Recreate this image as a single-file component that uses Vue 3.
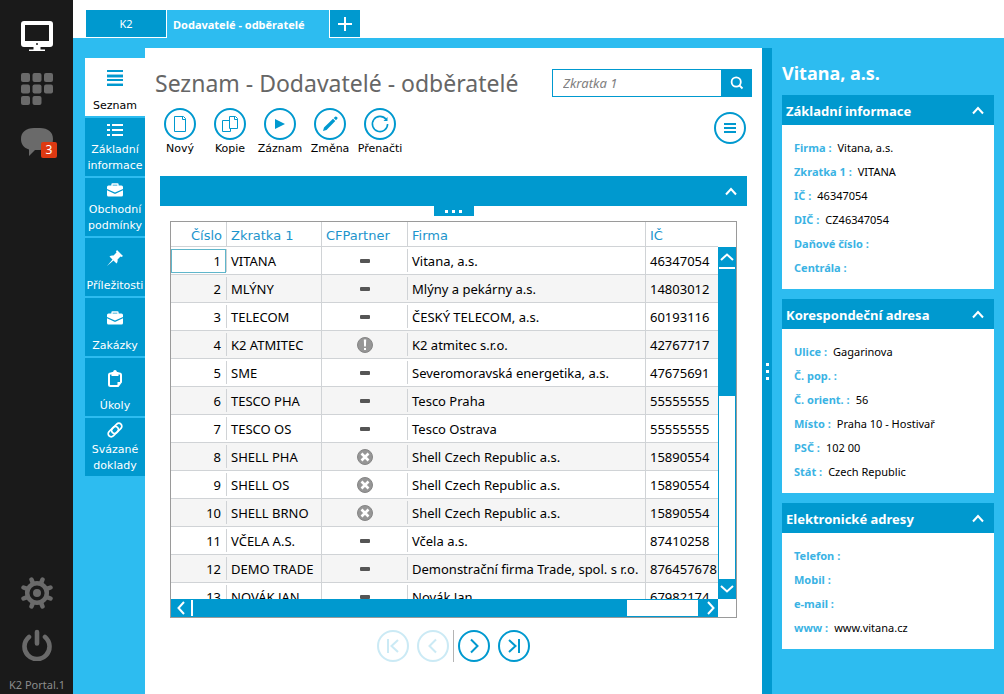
<script setup>
const navItems = [
  { lines: ['Seznam'], icon: 'lines', active: true },
  { lines: ['Základní', 'informace'], icon: 'list' },
  { lines: ['Obchodní', 'podmínky'], icon: 'case' },
  { lines: ['Příležitosti'], icon: 'pin' },
  { lines: ['Zakázky'], icon: 'case' },
  { lines: ['Úkoly'], icon: 'clipboard' },
  { lines: ['Svázané', 'doklady'], icon: 'clip' },
]

const actions = [
  { label: 'Nový', icon: 'new' },
  { label: 'Kopie', icon: 'copy' },
  { label: 'Záznam', icon: 'play' },
  { label: 'Změna', icon: 'edit' },
  { label: 'Přenačti', icon: 'reload' },
]

const rows = [
  ['VITANA', 'none', 'Vitana, a.s.', '46347054'],
  ['MLÝNY', 'none', 'Mlýny a pekárny a.s.', '14803012'],
  ['TELECOM', 'none', 'ČESKÝ TELECOM, a.s.', '60193116'],
  ['K2 ATMITEC', 'warn', 'K2 atmitec s.r.o.', '42767717'],
  ['SME', 'none', 'Severomoravská energetika, a.s.', '47675691'],
  ['TESCO PHA', 'none', 'Tesco Praha', '55555555'],
  ['TESCO OS', 'none', 'Tesco Ostrava', '55555555'],
  ['SHELL PHA', 'cross', 'Shell Czech Republic a.s.', '15890554'],
  ['SHELL OS', 'cross', 'Shell Czech Republic a.s.', '15890554'],
  ['SHELL BRNO', 'cross', 'Shell Czech Republic a.s.', '15890554'],
  ['VČELA A.S.', 'none', 'Včela a.s.', '87410258'],
  ['DEMO TRADE', 'none', 'Demonstrační firma Trade, spol. s r.o.', '876457678'],
  ['NOVÁK JAN', 'none', 'Novák Jan', '67982174'],
]

const panels = [
  {
    title: 'Základní informace',
    fields: [
      ['Firma', 'Vitana, a.s.'],
      ['Zkratka 1', 'VITANA'],
      ['IČ', '46347054'],
      ['DIČ', 'CZ46347054'],
      ['Daňové číslo', ''],
      ['Centrála', ''],
    ],
  },
  {
    title: 'Korespondeční adresa',
    fields: [
      ['Ulice', 'Gagarinova'],
      ['Č. pop.', ''],
      ['Č. orient.', '56'],
      ['Místo', 'Praha 10 - Hostivař'],
      ['PSČ', '102 00'],
      ['Stát', 'Czech Republic'],
    ],
  },
  {
    title: 'Elektronické adresy',
    fields: [
      ['Telefon', ''],
      ['Mobil', ''],
      ['e-mail', ''],
      ['www', 'www.vitana.cz'],
    ],
  },
]
</script>

<template>
  <div class="app">
    <aside class="rail">
      <button class="rail-btn" aria-label="Plocha">
        <svg width="32" height="32" viewBox="0 0 32 32">
          <path fill="#fff" fill-rule="evenodd" d="M3 0H29Q32 0 32 3V23Q32 26 29 26H19.500V28.500H24V30H8V28.500H12.500V26H3Q0 26 0 23V3Q0 0 3 0ZM4 4V20H28V4Z" />
          <circle cx="16" cy="23" r="1" fill="#1a1a1a" />
        </svg>
      </button>
      <button class="rail-btn" aria-label="Aplikace">
        <svg width="32" height="32" viewBox="0 0 32 32" fill="#6a6a6a">
          <rect x="0" y="0" width="9" height="9" rx="2" /><rect x="11.500" y="0" width="9" height="9" rx="2" /><rect x="23" y="0" width="9" height="9" rx="2" />
          <rect x="0" y="11.500" width="9" height="9" rx="2" /><rect x="11.500" y="11.500" width="9" height="9" rx="2" /><rect x="23" y="11.500" width="9" height="9" rx="2" />
          <rect x="0" y="23" width="9" height="9" rx="2" /><rect x="11.500" y="23" width="9" height="9" rx="2" />
        </svg>
      </button>
      <button class="rail-btn messages" aria-label="Zprávy">
        <svg width="32" height="28" viewBox="0 0 32 28">
          <path fill="#6a6a6a" d="M13 0H19C27 0 32 4 32 11S27 22 19 22H14L8 28V21.500C3 20 0 16.500 0 11C0 4 5 0 13 0Z" />
        </svg>
        <span class="badge">3</span>
      </button>
      <div class="rail-bottom">
        <button class="rail-btn" aria-label="Nastavení">
          <svg width="32" height="32" viewBox="0 0 32 32" stroke="#6a6a6a" fill="none">
            <circle cx="16" cy="16" r="9.800" stroke-width="4.500" />
            <circle cx="16" cy="16" r="4" fill="#6a6a6a" stroke="none" />
            <path stroke-width="4.500" stroke-linecap="round" d="M20.300 5.600L21.500 2.500M26.400 11.700L29.500 10.500M26.400 20.300L29.500 21.500M20.300 26.400L21.500 29.500M11.700 26.400L10.500 29.500M5.600 20.300L2.500 21.500M5.600 11.700L2.500 10.500M11.700 5.600L10.500 2.500" />
          </svg>
        </button>
        <button class="rail-btn" aria-label="Odhlásit">
          <svg width="32" height="32" viewBox="0 0 32 32" stroke="#6a6a6a" fill="none" stroke-width="4.600" stroke-linecap="round">
            <path d="M8 8A12.500 12.500 0 1 0 24 8M16 3V14.500" />
          </svg>
        </button>
        <span class="version">K2 Portal.1</span>
      </div>
    </aside>

    <div class="main">
      <header class="tabs">
        <button class="tab">K2</button>
        <button class="tab current">Dodavatelé - odběratelé</button>
        <button class="tab add" aria-label="Nová záložka">
          <svg width="14" height="14" viewBox="0 0 14 14" stroke="#fff" stroke-width="2"><path d="M7 0V14M0 7H14" /></svg>
        </button>
      </header>

      <div class="body">
        <nav class="side">
          <button v-for="item in navItems" :key="item.lines[0]" class="side-btn" :class="{ active: item.active }">
            <span class="side-icon">
              <svg v-if="item.icon === 'lines'" width="16" height="16" viewBox="0 0 16 16">
                <path fill="#0099cf" d="M0 0H16V2H0ZM0 5H16V7H0ZM0 9H16V11H0ZM0 14H16V16H0Z" />
                <path fill="#8fd0ea" d="M0 4H16V5H0ZM0 7H16V8H0ZM0 13H16V14H0Z" />
              </svg>
              <svg v-else-if="item.icon === 'list'" width="16" height="12" viewBox="0 0 16 12" fill="#fff">
                <path d="M0 0H3V2H0ZM5 0H16V2H5ZM0 5H3V7H0ZM5 5H16V7H5ZM0 10H3V12H0ZM5 10H16V12H5Z" />
              </svg>
              <svg v-else-if="item.icon === 'case'" width="16" height="14" viewBox="0 0 16 14">
                <path fill="none" stroke="#fff" stroke-width="1.300" d="M5 3.500V1.500Q5 1 5.500 1H10.500Q11 1 11 1.500V3.500" />
                <path fill="#fff" d="M1.500 2.500H14.500Q16 2.500 16 4V6L8 9.500L0 6V4Q0 2.500 1.500 2.500ZM0 7.200L6.500 10.200Q8 11.500 9.500 10.200L16 7.200V12Q16 13.500 14.500 13.500H1.500Q0 13.500 0 12Z" />
              </svg>
              <svg v-else-if="item.icon === 'pin'" width="16" height="16" viewBox="0 0 16 16">
                <path fill="#fff" d="M10 0L16 6L14.500 7L13.500 6.500L10.500 9.500Q11 12 9.500 13.500L6.500 10.500L0 16L5.500 9.500L2.500 6.500Q4 5 6.500 5.500L9.500 2.500L9 1.500Z" />
              </svg>
              <svg v-else-if="item.icon === 'clipboard'" width="14" height="17" viewBox="0 0 14 17">
                <path fill="none" stroke="#fff" stroke-width="2" d="M2.500 3.500H11.500Q13 3.500 13 5V12L10 16H2.500Q1 16 1 14.500V5Q1 3.500 2.500 3.500Z" />
                <path fill="#fff" d="M3.500 2H5Q5.500 0 7 0T9 2H10.500V6H3.500ZM9.500 12H13.500L9.500 16.500Z" />
              </svg>
              <svg v-else width="16" height="16" viewBox="0 0 16 16" fill="none" stroke="#fff" stroke-width="1.700">
                <rect x="-6" y="-3" width="12" height="6" rx="3" transform="translate(9.700 6.300) rotate(-45)" />
                <rect x="-6" y="-3" width="12" height="6" rx="3" transform="translate(6.300 9.700) rotate(-45)" />
              </svg>
            </span>
            <span v-for="line in item.lines" :key="line" class="side-line">{{ line }}</span>
          </button>
        </nav>

        <main class="content">
          <div class="heading">
            <h1>Seznam - Dodavatelé - odběratelé</h1>
            <form class="search" @submit.prevent>
              <input type="text" placeholder="Zkratka 1" aria-label="Zkratka 1" />
              <button aria-label="Hledat">
                <svg width="14" height="14" viewBox="0 0 14 14" fill="none" stroke="#fff" stroke-width="1.800"><circle cx="6.200" cy="6" r="4.600" /><path d="M9.500 9.500L12.500 12.500" /></svg>
              </button>
            </form>
          </div>

          <div class="toolbar">
            <button v-for="a in actions" :key="a.label" class="action">
              <span class="ring">
                <svg v-if="a.icon === 'new'" width="28" height="28" viewBox="0 0 28 28" fill="none" stroke="#0099cf">
                  <path d="M8.500 6.500H17.500L19.500 8.500V21.500H8.500ZM16.500 6.500V9.500H19.500" />
                </svg>
                <svg v-else-if="a.icon === 'copy'" width="28" height="28" viewBox="0 0 28 28" fill="none" stroke="#0099cf">
                  <path d="M13.500 6.500H19.500L21.500 8.500V18.500H13.500ZM18.500 6.500V9.500H21.500M13.500 10.500H6.500V21.500H14.500V18.500" />
                </svg>
                <svg v-else-if="a.icon === 'play'" width="28" height="28" viewBox="0 0 28 28"><path fill="#0099cf" d="M9 9L19 14L9 19Z" /></svg>
                <svg v-else-if="a.icon === 'edit'" width="28" height="28" viewBox="0 0 28 28" fill="#0099cf">
                  <path d="M7 21L8 17.500L17 8.700L19.300 11L10.500 20ZM17.700 8L19.500 6.500Q20.500 6.500 21.500 7.500V8.500L20 10.300Z" />
                </svg>
                <svg v-else width="28" height="28" viewBox="0 0 28 28">
                  <path fill="none" stroke="#0099cf" stroke-width="1.600" d="M20 9.300A7.600 7.600 0 1 0 21.600 14" />
                  <path fill="#0099cf" d="M21.500 7V11H17.500Z" />
                </svg>
              </span>
              <span class="action-label">{{ a.label }}</span>
            </button>
            <button class="ring menu" aria-label="Nabídka">
              <svg width="12" height="10" viewBox="0 0 12 10" fill="#0099cf"><path d="M0 0H12V2H0ZM0 4H12V6H0ZM0 8H12V10H0Z" /></svg>
            </button>
          </div>

          <div class="filter">
            <button aria-label="Sbalit">
              <svg width="12" height="9" viewBox="0 0 12 9" fill="none" stroke="#fff" stroke-width="2"><path d="M1 7.500L6 2L11 7.500" /></svg>
            </button>
          </div>
          <div class="handle"><i /><i /><i /></div>

          <div class="grid">
            <div class="viewport">
              <table>
                <colgroup><col class="c-num" /><col class="c-abbr" /><col class="c-cf" /><col class="c-firm" /><col /></colgroup>
                <thead>
                  <tr><th class="num">Číslo</th><th>Zkratka 1</th><th>CFPartner</th><th>Firma</th><th>IČ</th></tr>
                </thead>
                <tbody>
                  <tr v-for="(row, i) in rows" :key="i">
                    <td class="num short"><span :class="{ cursor: i === 0 }">{{ i + 1 }}</span></td>
                    <td>{{ row[0] }}</td>
                    <td class="state short">
                      <i v-if="row[1] === 'none'" class="dash" />
                      <svg v-else width="16" height="16" viewBox="0 0 16 16">
                        <circle cx="8" cy="8" r="7.500" fill="#969696" stroke="#858585" />
                        <path v-if="row[1] === 'warn'" fill="#fff" d="M6.800 2.500H9.200L8.900 9.500H7.100ZM7 11H9V13H7Z" />
                        <path v-else stroke="#fff" stroke-width="2.600" d="M4.500 4.500L11.500 11.500M11.500 4.500L4.500 11.500" />
                      </svg>
                    </td>
                    <td>{{ row[2] }}</td>
                    <td>{{ row[3] }}</td>
                  </tr>
                </tbody>
              </table>
            </div>
            <div class="vbar">
              <button aria-label="Nahoru">
                <svg width="14" height="8" viewBox="0 0 14 8" fill="none" stroke="#fff" stroke-width="2"><path d="M1 7L7 1.500L13 7" /></svg>
              </button>
              <span class="vthumb" />
              <span class="vtrack" />
              <button aria-label="Dolů">
                <svg width="14" height="8" viewBox="0 0 14 8" fill="none" stroke="#fff" stroke-width="2"><path d="M1 1L7 6.500L13 1" /></svg>
              </button>
            </div>
            <div class="hbar">
              <button aria-label="Vlevo">
                <svg width="8" height="14" viewBox="0 0 8 14" fill="none" stroke="#fff" stroke-width="2"><path d="M7 1L1.500 7L7 13" /></svg>
              </button>
              <span class="hthumb" />
              <span class="htrack" />
              <button class="to-right" aria-label="Vpravo">
                <svg width="8" height="14" viewBox="0 0 8 14" fill="none" stroke="#fff" stroke-width="2"><path d="M1 1L6.500 7L1 13" /></svg>
              </button>
            </div>
          </div>

          <div class="pager">
            <button class="ring" disabled aria-label="První">
              <svg width="14" height="16" viewBox="0 0 14 16" fill="none" stroke="#0099cf" stroke-width="2"><path d="M2 1V15M12 2L5.500 8L12 14" /></svg>
            </button>
            <button class="ring" disabled aria-label="Předchozí">
              <svg width="14" height="16" viewBox="0 0 14 16" fill="none" stroke="#0099cf" stroke-width="2"><path d="M10 1.500L3.500 8L10 14.500" /></svg>
            </button>
            <span class="sep" />
            <button class="ring" aria-label="Další">
              <svg width="14" height="16" viewBox="0 0 14 16" fill="none" stroke="#0099cf" stroke-width="2"><path d="M4 1.500L10.500 8L4 14.500" /></svg>
            </button>
            <button class="ring" aria-label="Poslední">
              <svg width="14" height="16" viewBox="0 0 14 16" fill="none" stroke="#0099cf" stroke-width="2"><path d="M2 2L8.500 8L2 14M12 1V15" /></svg>
            </button>
          </div>
        </main>

        <div class="splitter"><i /><i /><i /></div>

        <aside class="detail">
          <h2>Vitana, a.s.</h2>
          <section v-for="p in panels" :key="p.title" class="panel">
            <button class="panel-head">
              <span>{{ p.title }}</span>
              <svg width="12" height="9" viewBox="0 0 12 9" fill="none" stroke="#fff" stroke-width="2"><path d="M1 7.500L6 2L11 7.500" /></svg>
            </button>
            <dl>
              <div v-for="f in p.fields" :key="f[0]" class="field">
                <dt>{{ f[0] }} :</dt>
                <dd>{{ f[1] }}</dd>
              </div>
            </dl>
          </section>
        </aside>
      </div>
    </div>
  </div>
</template>

<style>
body {
  margin: 0;
}
</style>

<style scoped>
.app {
  --blue: #0099cf;
  --sky: #2dbcf0;
  --ui: 'DejaVu Sans', Verdana, sans-serif;
  --text: 'Noto Sans', 'Open Sans', sans-serif;
  display: flex;
  height: 100vh;
  min-height: 680px;
  background: #fff;
  font-family: var(--text);
  color: #000;
}
* {
  box-sizing: border-box;
}
button {
  border: 0;
  margin: 0;
  padding: 0;
  background: none;
  font: inherit;
  color: inherit;
}
svg {
  display: block;
  flex: none;
}

/* left rail */
.rail {
  flex: 0 0 73px;
  display: flex;
  flex-direction: column;
  align-items: center;
  gap: 20px;
  padding: 21px 0 0 1px;
  background: #1a1a1a;
}
.messages {
  position: relative;
  margin-top: 3px;
}
.badge {
  position: absolute;
  left: 20px;
  top: 14px;
  width: 16px;
  height: 16px;
  border-radius: 2px;
  background: #dc3912;
  color: #fff;
  font-size: 12px;
  line-height: 16px;
  text-align: center;
}
.rail-bottom {
  margin-top: auto;
  display: flex;
  flex-direction: column;
  align-items: center;
  gap: 20px;
}
.version {
  margin-top: -4px;
  padding-bottom: 1px;
  color: #8c8c8c;
  font-size: 11px;
  line-height: 16px;
  white-space: nowrap;
}

/* tabs */
.main {
  flex: 1;
  min-width: 0;
  display: flex;
  flex-direction: column;
}
.tabs {
  display: flex;
  align-items: flex-start;
  gap: 1px;
  height: 38px;
  padding: 10px 0 0 13px;
}
.tab {
  width: 80px;
  height: 27px;
  display: flex;
  align-items: center;
  justify-content: center;
  background: var(--blue);
  color: #fff;
  font-size: 11px;
  white-space: nowrap;
}
.tab.current {
  width: 162px;
  height: 28px;
  justify-content: flex-start;
  padding-left: 6px;
  background: var(--sky);
  font-weight: bold;
}
.tab.add {
  width: 30px;
}
.body {
  flex: 1;
  min-height: 0;
  display: flex;
  padding: 10px 10px 0 12px;
  background: var(--sky);
}

/* section buttons */
.side {
  flex: 0 0 60px;
  display: flex;
  flex-direction: column;
  gap: 2px;
  padding-top: 10px;
}
.side-btn {
  height: 58px;
  padding-bottom: 2px;
  display: flex;
  flex-direction: column;
  align-items: center;
  background: var(--blue);
  color: #fff;
  font-family: var(--ui);
  font-size: 11px;
}
.side-btn.active {
  background: #fff;
  color: #000;
}
.side-icon {
  flex: 1;
  display: flex;
  align-items: center;
}
.side-line {
  line-height: 16px;
  white-space: nowrap;
}

/* content */
.content {
  flex: 1;
  min-width: 0;
  display: flex;
  flex-direction: column;
  background: #fff;
}
.heading {
  display: flex;
  align-items: center;
  justify-content: space-between;
  padding: 20px 10px 0;
}
h1 {
  margin: 0;
  color: #666;
  font-weight: normal;
  font-size: 23px;
  line-height: 30px;
  white-space: nowrap;
}
.search {
  flex: none;
  width: 200px;
  display: flex;
  height: 28px;
}
.search input {
  flex: 1;
  min-width: 0;
  border: 1px solid var(--blue);
  padding: 0 10px;
  font: italic 13px var(--text);
  outline: 0;
}
.search input::placeholder {
  color: #808080;
}
.search button {
  flex: none;
  width: 30px;
  display: flex;
  align-items: center;
  justify-content: center;
  background: var(--blue);
}
.toolbar {
  display: flex;
  align-items: flex-start;
  padding: 10px 16px 0 10px;
  height: 77px;
}
.action {
  width: 50px;
  display: flex;
  flex-direction: column;
  align-items: center;
  gap: 1px;
  font-family: var(--ui);
  font-size: 11px;
}
.action-label {
  line-height: 16px;
  white-space: nowrap;
}
.ring {
  width: 32px;
  height: 32px;
  display: flex;
  align-items: center;
  justify-content: center;
  border: 2px solid var(--blue);
  border-radius: 50%;
}
.menu {
  margin: 4px 0 0 auto;
}
.filter {
  height: 30px;
  margin: 1px 15px 0;
  padding-right: 10px;
  display: flex;
  flex: none;
  align-items: center;
  justify-content: flex-end;
  background: var(--blue);
}
.handle {
  align-self: center;
  flex: none;
  width: 40px;
  height: 10px;
  display: flex;
  align-items: center;
  justify-content: center;
  gap: 4px;
  background: var(--blue);
}
.handle i,
.splitter i {
  width: 3px;
  height: 3px;
  background: #fff;
}

/* data grid */
.grid {
  flex: 1;
  min-height: 0;
  margin: 5px 25px 0;
  display: grid;
  grid-template-columns: minmax(0, 1fr) 18px;
  grid-template-rows: minmax(0, 1fr) 18px;
  border: 1px solid #9a9a9a;
}
.viewport {
  overflow: hidden;
}
table {
  width: 100%;
  table-layout: fixed;
  border-collapse: separate;
  border-spacing: 0;
  font-size: 13px;
  white-space: nowrap;
}
.c-num {
  width: 56px;
}
.c-abbr {
  width: 95px;
}
.c-cf {
  width: 86px;
}
.c-firm {
  width: 238px;
}
th,
td {
  height: 28px;
  padding: 0 0 0 4px;
  border-right: 1px solid #d0d3d6;
  border-bottom: 1px solid #d0d3d6;
  text-align: left;
  line-height: 18px;
}
th {
  height: 25px;
  padding-top: 3px;
  color: #1c94cc;
  font-family: var(--ui);
  font-weight: normal;
}
th:last-child,
td:last-child {
  border-right: 0;
}
tbody tr:nth-child(even) {
  background: #f5f5f5;
}
td.short {
  border-right: 0;
  background: linear-gradient(#d0d3d6, #d0d3d6) right 0 top 2px / 1px 23px no-repeat;
}
.num {
  text-align: right;
  padding-left: 0;
}
th.num {
  padding-right: 4px;
}
td.num span {
  display: block;
  margin-right: 1px;
  padding-right: 4px;
  border: 1px solid transparent;
  line-height: 22px;
}
td.num .cursor {
  border-color: #5fb6cb;
}
.state {
  padding: 0;
}
.state svg {
  margin: 0 auto;
}
.dash {
  display: block;
  width: 10px;
  height: 4px;
  margin: 0 auto;
  border-radius: 1px;
  background: #555;
}
.vbar {
  margin-top: 25px;
  display: flex;
  flex-direction: column;
  background: var(--blue);
}
.vbar button,
.hbar button {
  flex: 0 0 20px;
  display: flex;
  align-items: center;
  justify-content: center;
}
.hbar .to-right {
  justify-content: flex-end;
  padding-right: 3px;
}
.vthumb {
  flex: 127;
  border-top: 2px solid #fff;
  margin-left: 1px;
  margin-right: 1px;
}
.vtrack {
  flex: 183;
  margin: 0 1px;
  background: #fff;
}
.hbar {
  display: flex;
  background: var(--blue);
}
.hthumb {
  flex: 434;
  border-left: 2px solid #fff;
  margin: 1px 0;
}
.htrack {
  flex: 71;
  margin: 1px 0;
  background: #fff;
}

/* record pager */
.pager {
  flex: none;
  display: flex;
  justify-content: center;
  gap: 8px;
  padding: 12px 0 32px;
}
.pager .ring:disabled {
  opacity: 0.2;
}
.sep {
  width: 1px;
  margin: 0 -4px;
  background: #b4b4b4;
}

/* detail */
.splitter {
  flex: 0 0 10px;
  display: flex;
  flex-direction: column;
  align-items: center;
  justify-content: center;
  gap: 4px;
  background: var(--blue);
}
.detail {
  flex: 0 0 222px;
  padding: 10px 0 0 10px;
}
h2 {
  margin: 0;
  color: #fff;
  font-size: 18px;
  line-height: 30px;
  padding-bottom: 7px;
}
.panel {
  margin-bottom: 10px;
  background: #fff;
}
.panel-head {
  width: 100%;
  height: 30px;
  display: flex;
  align-items: center;
  justify-content: space-between;
  padding: 0 10px 0 4px;
  background: var(--blue);
  color: #fff;
  font-size: 13px;
  font-weight: bold;
}
.panel-head span {
  padding-top: 2px;
}
dl {
  margin: 0;
  padding: 11px 12px 9px;
}
.field {
  display: flex;
  gap: 6px;
  font-size: 11px;
  line-height: 24px;
  white-space: nowrap;
}
dt {
  color: #3bb3e4;
  font-weight: bold;
}
dd {
  margin: 0;
}
</style>
